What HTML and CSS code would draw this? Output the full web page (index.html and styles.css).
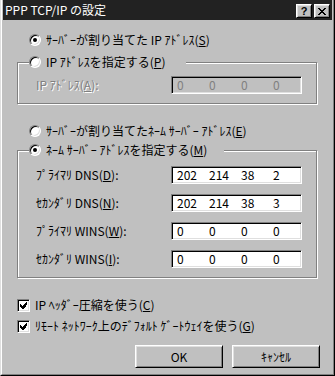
FILE: index.html
```html
<!DOCTYPE html>
<html lang="ja">
<head>
<meta charset="utf-8">
<title>PPP TCP/IP の設定</title>
<link rel="stylesheet" href="styles.css">
</head>
<body>
<div class="window">
  <div class="frame">
    <div class="titlebar">
      <span class="title">PPP TCP/IP の設定</span>
      <div class="tbtns">
        <div class="tbtn help">?</div>
        <div class="tbtn close">
          <svg width="8" height="7" viewBox="0 0 8 7" shape-rendering="crispEdges"><path d="M0 0h2v1h-2zM6 0h2v1h-2zM1 1h2v1h-2zM5 1h2v1h-2zM2 2h4v1h-4zM3 3h2v1h-2zM2 4h4v1h-4zM1 5h2v1h-2zM5 5h2v1h-2zM0 6h2v1h-2zM6 6h2v1h-2z" fill="#000"/></svg>
        </div>
      </div>
    </div>
    <div class="client">
      <div class="opt r1"><span class="radio checked"></span><span class="txt">ｻｰﾊﾞｰが割り当てた IP ｱﾄﾞﾚｽ(<u>S</u>)</span></div>

      <div class="group g1">
        <div class="legend"><span class="radio"></span><span class="txt">IP ｱﾄﾞﾚｽを指定する(<u>P</u>)</span></div>
        <div class="rows first">
          <div class="row">
            <span class="lbl disabled">IP ｱﾄﾞﾚｽ(<u>A</u>):</span>
            <div class="ipf disabled"><span class="oct">0</span><span class="oct">0</span><span class="oct">0</span><span class="oct">0</span></div>
          </div>
        </div>
      </div>

      <div class="opt r3"><span class="radio"></span><span class="txt">ｻｰﾊﾞｰが割り当てたﾈｰﾑ ｻｰﾊﾞｰ ｱﾄﾞﾚｽ(<u>E</u>)</span></div>

      <div class="group g2">
        <div class="legend"><span class="radio checked"></span><span class="txt">ﾈｰﾑ ｻｰﾊﾞｰ ｱﾄﾞﾚｽを指定する(<u>M</u>)</span></div>
        <div class="rows second">
          <div class="row">
            <span class="lbl">ﾌﾟﾗｲﾏﾘ DNS(<u>D</u>):</span>
            <div class="ipf"><span class="oct">202</span><span class="oct">214</span><span class="oct">38</span><span class="oct">2</span></div>
          </div>
          <div class="row">
            <span class="lbl">ｾｶﾝﾀﾞﾘ DNS(<u>N</u>):</span>
            <div class="ipf"><span class="oct">202</span><span class="oct">214</span><span class="oct">38</span><span class="oct">3</span></div>
          </div>
          <div class="row">
            <span class="lbl">ﾌﾟﾗｲﾏﾘ WINS(<u>W</u>):</span>
            <div class="ipf"><span class="oct">0</span><span class="oct">0</span><span class="oct">0</span><span class="oct">0</span></div>
          </div>
          <div class="row">
            <span class="lbl">ｾｶﾝﾀﾞﾘ WINS(<u>I</u>):</span>
            <div class="ipf"><span class="oct">0</span><span class="oct">0</span><span class="oct">0</span><span class="oct">0</span></div>
          </div>
        </div>
      </div>

      <div class="checks">
        <div class="opt"><span class="cb"><svg width="7" height="7" viewBox="0 0 7 7" shape-rendering="crispEdges"><path d="M6 0h1v3h-1zM5 1h1v4h-1zM4 2h1v4h-1zM3 3h1v4h-1zM2 4h1v3h-1zM1 3h1v3h-1zM0 2h1v3h-1z" fill="#000"/></svg></span><span class="txt">IP ﾍｯﾀﾞｰ圧縮を使う(<u>C</u>)</span></div>
        <div class="opt"><span class="cb"><svg width="7" height="7" viewBox="0 0 7 7" shape-rendering="crispEdges"><path d="M6 0h1v3h-1zM5 1h1v4h-1zM4 2h1v4h-1zM3 3h1v4h-1zM2 4h1v3h-1zM1 3h1v3h-1zM0 2h1v3h-1z" fill="#000"/></svg></span><span class="txt">ﾘﾓｰﾄ ﾈｯﾄﾜｰｸ上のﾃﾞﾌｫﾙﾄ ｹﾞｰﾄｳｪｲを使う(<u>G</u>)</span></div>
      </div>

      <div class="buttons">
        <div class="btn">OK</div>
        <div class="btn">ｷｬﾝｾﾙ</div>
      </div>
    </div>
  </div>
</div>
</body>
</html>
```
FILE: styles.css
```css
html, body {
  margin: 0;
  padding: 0;
  background: #c0c0c0;
}

body {
  font-family: "Noto Sans CJK JP", "Noto Sans", sans-serif;
  font-size: 12px;
  color: #000;
}

.window {
  width: 335px;
  height: 376px;
  box-sizing: border-box;
  background: #c0c0c0;
  border-left: 1px solid #dfdfdf;
  border-right: 1px solid #000;
  border-bottom: 1px solid #000;
}

.frame {
  height: 100%;
  box-sizing: border-box;
  border-left: 1px solid #fff;
  border-right: 1px solid #808080;
  border-bottom: 1px solid #808080;
  padding: 0 1px 1px 1px;
  display: flex;
  flex-direction: column;
}

.titlebar {
  height: 20px;
  background: #222;
  display: flex;
  align-items: flex-start;
  justify-content: space-between;
  padding: 0 2px 0 2px;
  flex: none;
}

.title {
  color: #fff;
  font-size: 12px;
  line-height: 19px;
  white-space: nowrap;
}

.tbtns {
  display: flex;
  gap: 2px;
  margin-top: 4px;
}

.tbtn {
  width: 16px;
  height: 14px;
  box-sizing: border-box;
  background: #c0c0c0;
  border: 1px solid;
  border-color: #fff #000 #000 #fff;
  box-shadow: inset 1px 1px 0 #dfdfdf, inset -1px -1px 0 #808080;
  display: flex;
  align-items: center;
  justify-content: center;
}

.help {
  font-family: "Liberation Sans", sans-serif;
  font-weight: bold;
  font-size: 11px;
  line-height: 12px;
}

.client {
  padding: 12px 0 0 14px;
  flex: 1;
}

.opt {
  display: flex;
  align-items: center;
  gap: 5px;
  height: 16px;
}

.r1, .r3 {
  margin-left: 12px;
}

.r3 {
  margin-top: 19px;
}

.txt, .lbl {
  white-space: nowrap;
  line-height: 16px;
}

.radio {
  width: 12px;
  height: 12px;
  box-sizing: border-box;
  flex: none;
  border-radius: 50%;
  border: 1px solid;
  border-color: #808080 #fff #fff #808080;
  background: #fff;
  box-shadow: inset 1px 1px 0 #000, inset -1px -1px 0 #dfdfdf;
  display: flex;
  align-items: center;
  justify-content: center;
}

.radio.checked::after {
  content: "";
  width: 4px;
  height: 4px;
  border-radius: 50%;
  background: #000;
}

.group {
  width: 300px;
  box-sizing: border-box;
  border: 1px solid #808080;
  box-shadow: inset 1px 1px 0 #fff, 1px 1px 0 #fff;
}

.g1 {
  margin-top: 14px;
  padding-bottom: 9px;
}

.g2 {
  margin-top: 11px;
  padding-bottom: 9px;
}

.legend {
  display: flex;
  align-items: center;
  gap: 5px;
  height: 16px;
  width: fit-content;
  margin: -9px 0 0 11px;
  padding-right: 20px;
  background: #c0c0c0;
}

.g2 .legend {
  padding-right: 17px;
}

.rows {
  display: flex;
  flex-direction: column;
  gap: 10px;
  padding-left: 18px;
}

.rows.first {
  margin-top: 6px;
}

.rows.second {
  margin-top: 8px;
}

.row {
  display: grid;
  grid-template-columns: 135px 131px;
  align-items: center;
  height: 18px;
}

.lbl.disabled {
  color: #808080;
  text-shadow: 1px 1px 0 #fff;
}

.ipf {
  width: 131px;
  height: 18px;
  box-sizing: border-box;
  border: 1px solid;
  border-color: #808080 #fff #fff #808080;
  box-shadow: inset 1px 1px 0 #000, inset -1px -1px 0 #dfdfdf;
  background: #fff;
  display: flex;
  align-items: center;
  padding-left: 5px;
}

.ipf.disabled {
  background: #c0c0c0;
  color: #808080;
}

.oct {
  width: 32px;
  line-height: 14px;
  flex: none;
}

.checks {
  margin-top: 19px;
  display: flex;
  flex-direction: column;
  gap: 5px;
}

.cb {
  width: 13px;
  height: 13px;
  box-sizing: border-box;
  flex: none;
  border: 1px solid;
  border-color: #808080 #fff #fff #808080;
  box-shadow: inset 1px 1px 0 #000, inset -1px -1px 0 #dfdfdf;
  background: #fff;
  display: flex;
  align-items: center;
  justify-content: center;
}

.cb svg {
  display: block;
}

.buttons {
  margin-top: 11px;
  display: flex;
  justify-content: flex-end;
  gap: 9px;
  padding-right: 12px;
}

.btn {
  width: 88px;
  height: 23px;
  box-sizing: border-box;
  border: 1px solid;
  border-color: #fff #000 #000 #fff;
  box-shadow: inset 1px 1px 0 #dfdfdf, inset -1px -1px 0 #808080;
  background: #c0c0c0;
  display: flex;
  align-items: center;
  justify-content: center;
  white-space: nowrap;
}
```
